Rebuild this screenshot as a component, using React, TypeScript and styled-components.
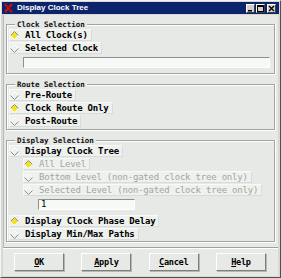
import styled, { createGlobalStyle } from "styled-components";

const GlobalStyle = createGlobalStyle`
  html, body {
    margin: 0;
    padding: 0;
    background: #d8d8d4;
    overflow: hidden;
  }
`;

const Window = styled.div`
  display: flex;
  flex-direction: column;
  width: 281px;
  height: 278px;
  box-sizing: border-box;
  padding: 1px;
  background: #d8d8d4;
  border-top: 1px solid #f4f4f2;
  border-left: 1px solid #f4f4f2;
  border-right: 1px solid #505050;
  border-bottom: 1px solid #505050;
`;

const TitleBar = styled.div`
  display: flex;
  align-items: center;
  height: 12px;
  padding: 0 3px 0 2px;
  background: #0c246c;
  flex-shrink: 0;
`;

const Title = styled.span`
  flex: 1;
  margin-left: 4px;
  color: #ffffff;
  font-family: "Liberation Sans", Arial, sans-serif;
  font-weight: 700;
  font-size: 8px;
  line-height: 12px;
  white-space: nowrap;
`;

const TitleButton = styled.div<{ $gap?: number }>`
  display: flex;
  align-items: center;
  justify-content: center;
  width: 9px;
  height: 9px;
  box-sizing: border-box;
  margin-left: ${(p) => p.$gap ?? 1}px;
  background: #d4d0c8;
  border-top: 1px solid #ffffff;
  border-left: 1px solid #ffffff;
  border-right: 1px solid #404040;
  border-bottom: 1px solid #404040;
`;

const Body = styled.div`
  display: flex;
  flex-direction: column;
  flex: 1;
  background: #e6e9e5;
  margin: 1px 1px 0 1px;
`;

const Panel = styled.div`
  display: flex;
  flex-direction: column;
  padding: 5px 3px 0 2px;
  height: 233px;
  box-sizing: border-box;
  border-left: 1px solid #b8bcb8;
  border-bottom: 1px solid #9ea29e;
  box-shadow: 0 1px 0 #ffffff;
`;

const Group = styled.section`
  display: flex;
  flex-direction: column;
  margin-bottom: 6px;

  &:last-child {
    margin-bottom: 0;
  }
`;

const GroupHead = styled.div`
  display: flex;
  height: 9px;

  &::before,
  &::after {
    content: "";
    align-self: flex-end;
    height: 4px;
    border-top: 1px solid #a2a6a2;
  }

  &::before {
    width: 8px;
    border-left: 1px solid #a2a6a2;
    box-shadow: inset 1px 1px 0 #ffffff;
  }

  &::after {
    flex: 1;
    border-right: 1px solid #a2a6a2;
    box-shadow: inset 0 1px 0 #ffffff, 1px 0 0 #ffffff;
  }
`;

const Legend = styled.span`
  padding: 0 2px;
  font-family: "DejaVu Sans Mono", "Liberation Mono", monospace;
  font-weight: 700;
  font-size: 7.5px;
  line-height: 9px;
  color: #101010;
  white-space: nowrap;
`;

const GroupBody = styled.div<{ $pad?: number }>`
  display: flex;
  flex-direction: column;
  align-items: flex-start;
  padding: 0 0 ${(p) => p.$pad ?? 0}px 2px;
  border-left: 1px solid #a2a6a2;
  border-right: 1px solid #a2a6a2;
  border-bottom: 1px solid #a2a6a2;
  box-shadow: inset 1px 0 0 #ffffff, 1px 1px 0 #ffffff;
`;

const Row = styled.div<{ $indent?: boolean }>`
  display: flex;
  align-items: center;
  height: 12px;
  box-sizing: border-box;
  margin: 0 0 1px ${(p) => (p.$indent ? "14px" : "0")};
  padding: 0 3px 0 0;
  background: #eef1ed;
  border-top: 1px solid #f8faf8;
  border-left: 1px solid #f8faf8;
  border-right: 1px solid #d8dcd8;
  border-bottom: 1px solid #d8dcd8;
`;

const Label = styled.span<{ $disabled?: boolean }>`
  margin-left: 6px;
  font-family: "DejaVu Sans Mono", "Liberation Mono", monospace;
  font-weight: ${(p) => (p.$disabled ? 400 : 700)};
  font-size: 9px;
  letter-spacing: -0.2px;
  line-height: 10px;
  white-space: nowrap;
  color: ${(p) => (p.$disabled ? "#a2a6a2" : "#000000")};
`;

const Field = styled.div<{ $width: string; $indent: string }>`
  width: ${(p) => p.$width};
  height: 11px;
  box-sizing: border-box;
  margin: 2px 0 5px ${(p) => p.$indent};
  padding-left: 2px;
  background: #f6f9f5;
  border-top: 1px solid #8c908c;
  border-left: 1px solid #8c908c;
  border-right: 1px solid #ffffff;
  border-bottom: 1px solid #ffffff;
  font-family: "DejaVu Sans Mono", "Liberation Mono", monospace;
  font-size: 9px;
  line-height: 9px;
  color: #000000;
`;

const ButtonBar = styled.div`
  display: flex;
  justify-content: space-between;
  padding: 5px 12px 0 11px;
`;

const Button = styled.div`
  display: flex;
  align-items: center;
  justify-content: center;
  width: 50px;
  height: 18px;
  box-sizing: border-box;
  background: #e6e9e5;
  border-top: 1px solid #ffffff;
  border-left: 1px solid #ffffff;
  border-right: 1px solid #7c807c;
  border-bottom: 1px solid #7c807c;
  box-shadow: 1px 1px 0 #b4b8b4;
  font-family: "DejaVu Sans Mono", "Liberation Mono", monospace;
  font-weight: 700;
  font-size: 8.6px;
  letter-spacing: -0.3px;
  color: #000000;

  u {
    text-decoration-thickness: 1px;
    text-underline-offset: 1px;
  }
`;

const Diamond = ({ on }: { on?: boolean }) => (
  <svg width="9" height="9" viewBox="0 0 9 9" style={{ flexShrink: 0 }}>
    {on && <polygon points="4.5,1 8,4.5 4.5,8 1,4.5" fill="#f6e21a" />}
    <polyline
      points="0.5,4.5 4.5,0.5 8.5,4.5"
      fill="none"
      stroke={on ? "#8a8e8a" : "#ffffff"}
      strokeWidth="1"
    />
    <polyline
      points="0.5,4.5 4.5,8.5 8.5,4.5"
      fill="none"
      stroke={on ? "#ffffff" : "#8a8e8a"}
      strokeWidth="1"
    />
  </svg>
);

const Option = ({
  text,
  on,
  disabled,
  indent,
}: {
  text: string;
  on?: boolean;
  disabled?: boolean;
  indent?: boolean;
}) => (
  <Row $indent={indent}>
    <Diamond on={on} />
    <Label $disabled={disabled}>{text}</Label>
  </Row>
);

const App = () => (
  <>
    <GlobalStyle />
    <Window>
      <TitleBar>
        <svg width="9" height="10" viewBox="0 0 9 10">
          <path d="M1 1 L8 9 M8 1 L1 9" stroke="#d01010" strokeWidth="2" />
          <path d="M2 1 L8 8" stroke="#7a0000" strokeWidth="0.8" />
        </svg>
        <Title>Display Clock Tree</Title>
        <TitleButton>
          <svg width="7" height="7" viewBox="0 0 7 7">
            <rect x="1" y="5" width="4" height="1.5" fill="#000" />
          </svg>
        </TitleButton>
        <TitleButton>
          <svg width="7" height="7" viewBox="0 0 7 7">
            <rect x="0.5" y="0.5" width="6" height="6" fill="none" stroke="#000" />
            <rect x="0.5" y="0.5" width="6" height="1.5" fill="#000" />
          </svg>
        </TitleButton>
        <TitleButton $gap={2}>
          <svg width="7" height="7" viewBox="0 0 7 7">
            <path d="M1 1 L6 6 M6 1 L1 6" stroke="#000" strokeWidth="1.4" />
          </svg>
        </TitleButton>
      </TitleBar>
      <Body>
        <Panel>
          <Group>
            <GroupHead>
              <Legend>Clock Selection</Legend>
            </GroupHead>
            <GroupBody>
              <Option text="All Clock(s)" on />
              <Option text="Selected Clock" />
              <Field $width="247px" $indent="14px" />
            </GroupBody>
          </Group>
          <Group>
            <GroupHead>
              <Legend>Route Selection</Legend>
            </GroupHead>
            <GroupBody $pad={1}>
              <Option text="Pre-Route" />
              <Option text="Clock Route Only" on />
              <Option text="Post-Route" />
            </GroupBody>
          </Group>
          <Group>
            <GroupHead>
              <Legend>Display Selection</Legend>
            </GroupHead>
            <GroupBody>
              <Option text="Display Clock Tree" />
              <Option text="All Level" on disabled indent />
              <Option text="Bottom Level (non-gated clock tree only)" disabled indent />
              <Option text="Selected Level (non-gated clock tree only)" disabled indent />
              <Field $width="97px" $indent="29px">1</Field>
              <Option text="Display Clock Phase Delay" on />
              <Option text="Display Min/Max Paths" />
            </GroupBody>
          </Group>
        </Panel>
        <ButtonBar>
          <Button>
            <span>
              <u>O</u>K
            </span>
          </Button>
          <Button>
            <span>
              <u>A</u>pply
            </span>
          </Button>
          <Button>
            <span>
              <u>C</u>ancel
            </span>
          </Button>
          <Button>
            <span>
              <u>H</u>elp
            </span>
          </Button>
        </ButtonBar>
      </Body>
    </Window>
  </>
);

export default App;
